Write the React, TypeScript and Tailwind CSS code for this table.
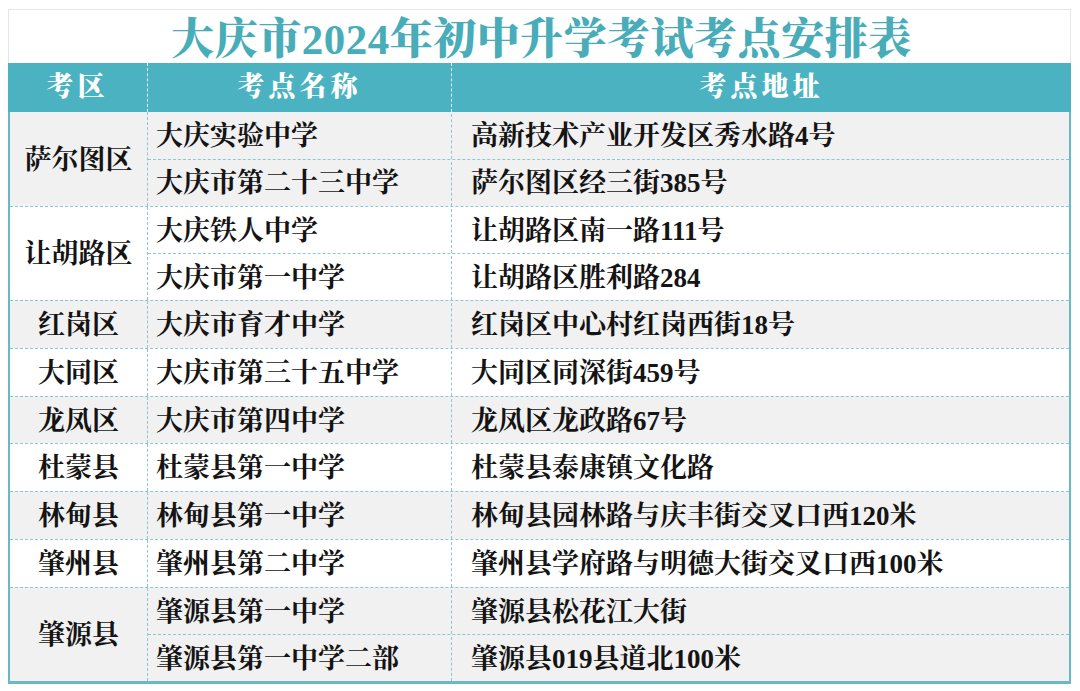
import React from 'react';

interface Site {
  name: string;
  address: string;
}

interface District {
  area: string;
  sites: Site[];
}

const districts: District[] = [
  {
    area: '萨尔图区',
    sites: [
      { name: '大庆实验中学', address: '高新技术产业开发区秀水路4号' },
      { name: '大庆市第二十三中学', address: '萨尔图区经三街385号' },
    ],
  },
  {
    area: '让胡路区',
    sites: [
      { name: '大庆铁人中学', address: '让胡路区南一路111号' },
      { name: '大庆市第一中学', address: '让胡路区胜利路284' },
    ],
  },
  { area: '红岗区', sites: [{ name: '大庆市育才中学', address: '红岗区中心村红岗西街18号' }] },
  { area: '大同区', sites: [{ name: '大庆市第三十五中学', address: '大同区同深街459号' }] },
  { area: '龙凤区', sites: [{ name: '大庆市第四中学', address: '龙凤区龙政路67号' }] },
  { area: '杜蒙县', sites: [{ name: '杜蒙县第一中学', address: '杜蒙县泰康镇文化路' }] },
  { area: '林甸县', sites: [{ name: '林甸县第一中学', address: '林甸县园林路与庆丰街交叉口西120米' }] },
  { area: '肇州县', sites: [{ name: '肇州县第二中学', address: '肇州县学府路与明德大街交叉口西100米' }] },
  {
    area: '肇源县',
    sites: [
      { name: '肇源县第一中学', address: '肇源县松花江大街' },
      { name: '肇源县第一中学二部', address: '肇源县019县道北100米' },
    ],
  },
];

const serif = "font-['Liberation_Serif','Noto_Serif_CJK_SC','Noto_Sans_CJK_SC',serif]";

const App: React.FC = () => {
  return (
    <div className="w-[1080px] h-[691px] bg-white pt-[9px] pl-[8px]">
      <div className="w-[1063px] flex flex-col">
        {/* title */}
        <div className="h-[54px] bg-white border-t border-l border-r border-[#e6e6e6] flex items-center justify-center pt-[5px]">
          <h1 className={`${serif} text-[43px] font-black leading-none text-[#48adb9] tracking-[0.5px] pl-[4px]`}>
            大庆市2024年初中升学考试考点安排表
          </h1>
        </div>

        {/* header */}
        <div className={`${serif} h-[49px] bg-[#4ab2c0] flex text-white font-black text-[27px] tracking-[4px]`}>
          <div className="w-[140px] flex items-center justify-center border-r border-dashed border-[#dff3f5]">考区</div>
          <div className="w-[304px] flex items-center justify-center border-r border-dashed border-[#dff3f5]">考点名称</div>
          <div className="flex-1 flex items-center justify-center">考点地址</div>
        </div>

        {/* body */}
        <div className={`${serif} border-l-2 border-r-2 border-b-[3px] border-[#6ab9c2] text-[#141414] font-bold text-[27px]`}>
          {districts.map((d, i) => (
            <div
              key={d.area}
              className={`flex ${i > 0 ? 'border-t border-dashed border-[#8cc8cf]' : ''} ${i % 2 === 0 ? 'bg-[#f1f1f1]' : 'bg-white'}`}
            >
              <div className="w-[138px] flex items-center justify-center pt-[2px] border-r border-dashed border-[#8cc8cf]">
                {d.area}
              </div>
              <div className="flex-1 flex flex-col">
                {d.sites.map((s, j) => (
                  <div
                    key={s.name}
                    className={`flex h-[46.75px] pt-[2px] ${j > 0 ? 'border-t border-dashed border-[#8cc8cf]' : ''}`}
                  >
                    <div className="w-[304px] flex items-center pl-[8px] border-r border-dashed border-[#8cc8cf]">
                      {s.name}
                    </div>
                    <div className="flex-1 flex items-center pl-[19px]">{s.address}</div>
                  </div>
                ))}
              </div>
            </div>
          ))}
        </div>
      </div>
    </div>
  );
};

export default App;
